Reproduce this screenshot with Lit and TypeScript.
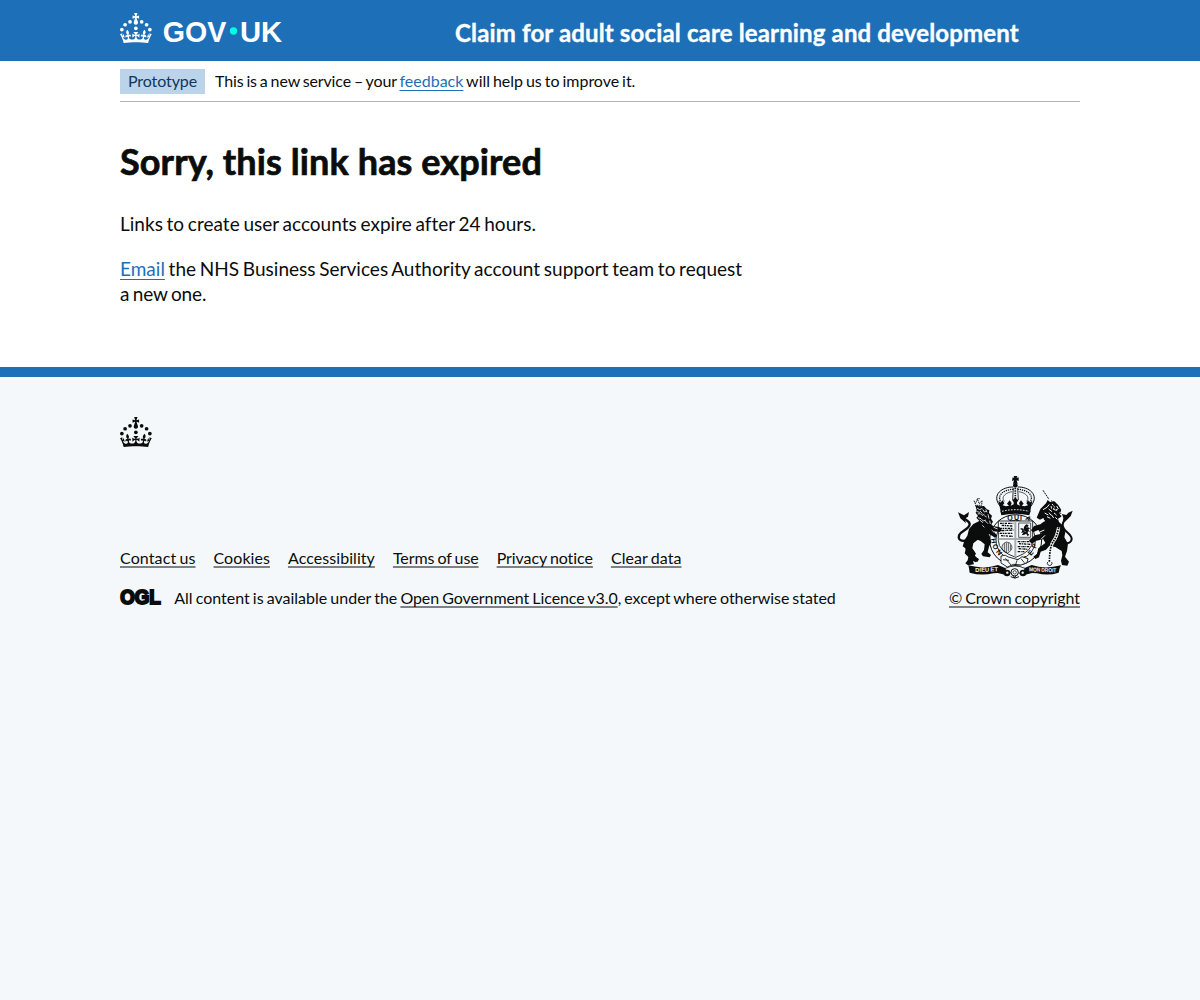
import { LitElement, html, css, svg } from "lit";
import { customElement } from "lit/decorators.js";

const crown = svg`
  <circle cx="20" cy="17.6" r="3.7"/><circle cx="10.2" cy="23.5" r="3.7"/><circle cx="3.7" cy="33.2" r="3.7"/>
  <circle cx="31.7" cy="30.6" r="3.7"/><circle cx="43.3" cy="17.6" r="3.7"/><circle cx="53.2" cy="23.5" r="3.7"/>
  <circle cx="59.7" cy="33.2" r="3.7"/>
  <path d="M33.1,9.8c.2-.1.3-.3.5-.5l4.6,2.4v-6.8l-4.6,1.5c-.1-.2-.3-.3-.5-.5l1.9-5.9h-6.7l1.9,5.9c-.2.1-.3.3-.5.5l-4.6-1.5v6.8l4.6-2.4c.1.2.3.3.5.5l-2.6,8c-.9,2.8,1.2,5.7,4.1,5.7h0c3,0,5.1-2.9,4.1-5.7l-2.6-8ZM37,37.9s-3.4,3.8-4.1,6.1c2.2,0,4.2-.5,6.4-2.8l-.7,8.5c-2-2.8-4.4-4.1-5.7-3.8.1,3.1.5,6.7,5.8,7.2,3.7.3,6.7-1.5,7-3.8.4-2.6-2-4.3-3.7-1.6-1.4-4.5,2.4-6.1,4.9-3.2-1.9-4.5-1.8-7.7,2.4-10.9,3,4,2.6,7.3-1.2,11.1,2.4-1.3,6.2,0,4,4.6-1.2-2.8-3.7-2.2-4.2.2-.3,1.7.7,3.7,3,4.2,1.9.3,4.7-.9,7-5.9-1.3,0-2.4.7-3.9,1.7l2.4-8c.6,2.3,1.4,3.7,2.2,4.5.6-1.6.5-2.8,0-5.3l5,1.8c-2.6,3.6-5.2,8.7-7.3,17.5-7.4-1.1-15.7-1.7-24.5-1.7h0c-8.8,0-17.1.6-24.5,1.7-2.1-8.9-4.7-13.9-7.3-17.5l5-1.8c-.5,2.5-.6,3.7,0,5.3.8-.8,1.6-2.3,2.2-4.5l2.4,8c-1.5-1-2.6-1.7-3.9-1.7,2.3,5,5.2,6.2,7,5.9,2.3-.4,3.3-2.4,3-4.2-.5-2.4-3-3.1-4.2-.2-2.2-4.6,1.6-6,4-4.6-3.7-3.7-4.2-7.1-1.2-11.1,4.2,3.2,4.3,6.4,2.4,10.9,2.5-2.8,6.3-1.3,4.9,3.2-1.8-2.7-4.1-1-3.7,1.6.3,2.3,3.3,4.1,7,3.8,5.4-.5,5.7-4.2,5.8-7.2-1.3-.2-3.7,1-5.7,3.8l-.7-8.5c2.2,2.3,4.2,2.7,6.4,2.8-.7-2.3-4.1-6.1-4.1-6.1h10.6,0Z"/>`;

@customElement("service-header")
export class ServiceHeader extends LitElement {
  static styles = css`
    :host { display: block; background: #1d70b8; color: #fff; }
    .bar { width: 960px; height: 61px; margin: 0 auto; display: flex; align-items: flex-start; }
    .logo { display: block; margin-top: 13px; flex: none; overflow: visible; }
    .dot { fill: #00ffe0; }
    .mark { font: 700 60px "Liberation Sans", Arial, sans-serif; fill: #fff; }
    .name { margin: 18px 0 0 173px; font-size: 24px; line-height: 30px; font-weight: 700;
      letter-spacing: 0.15px; white-space: nowrap; -webkit-text-stroke: 0.35px #fff; }
  `;
  render() {
    return html`<div class="bar">
      <svg class="logo" viewBox="0 0 324 60" width="162" height="30" fill="currentColor" role="img" aria-label="GOV.UK">
        ${crown}
        <text class="mark" x="85.500" y="57" textLength="127" lengthAdjust="spacingAndGlyphs">GOV</text>
        <circle class="dot" cx="227" cy="36" r="7.3"/>
        <text class="mark" x="240" y="57" textLength="84.500" lengthAdjust="spacingAndGlyphs">UK</text>
      </svg>
      <div class="name">Claim for adult social care learning and development</div>
    </div>`;
  }
}

@customElement("royal-arms")
export class RoyalArms extends LitElement {
  static styles = css`
    :host { display: block; }
    svg { display: block; }
    .ink { fill: #0b0c0c; }
    .paper { fill: #f4f8fb; }
    .line { fill: none; stroke: #0b0c0c; }
    .cut { fill: none; stroke: #f4f8fb; }
    .motto { font: 700 17px "Liberation Sans", Arial, sans-serif; fill: #f4f8fb; }
    .garter { font: 700 21px "Liberation Sans", Arial, sans-serif; fill: #0b0c0c; }
  `;
  render() {
    return html`<svg viewBox="12 18 393 309" width="131" height="103" aria-hidden="true">
      <!-- crown -->
      <path class="ink" d="M203 22l5 2-2-6h11l-2 6 6-2v11l-6-2 3 10h-14l3-10-6 2z"/>
      <circle class="ink" cx="211" cy="46" r="7"/>
      <path class="line" stroke-width="3" d="M165 108C138 74 172 50 205 51M258 108C285 74 251 50 218 51"/>
      <path class="line" stroke-width="4" stroke-dasharray="4 2.500" d="M170 98C151 76 179 58 205 58M253 98C272 76 244 58 218 58"/>
      <path class="line" stroke-width="2" d="M178 94C166 80 184 67 202 65M245 94C257 80 239 67 221 65"/>
      <path class="line" stroke-width="2.500" d="M205 54l-2 36M218 54l2 36"/>
      <path class="line" stroke-width="5" stroke-dasharray="4 3" d="M211 54v34"/>
      <path class="ink" d="M160 92l8 6 5-8 5 10-5 6 10 3 9-2-6-6 8-10 6 8-3 8 9-4 0-6-4-6 9-8 9 8-4 6 0 6 9 4-3-8 6-8 8 10-6 6 9 2 10-3-5-6 5-10 5 8 8-6-7 36H168z"/>
      <path class="ink" d="M166 122q46-14 91 0l-4 14q-42-9-84 0z"/>
      <path class="cut" stroke-width="3" stroke-dasharray="5 4" d="M171 124q40-10 81 0"/>
      <!-- garter and shield -->
      <ellipse class="paper" cx="212" cy="210" rx="78" ry="77"/>
      <ellipse class="line" stroke-width="3" cx="212" cy="210" rx="78" ry="76"/>
      <ellipse class="line" stroke-width="2.500" cx="212" cy="210" rx="59" ry="59"/>
      <text class="garter" x="187" y="151" textLength="44">QUI</text>
      <text class="garter" transform="translate(240 148) rotate(32)">A</text>
      <text class="garter" transform="translate(138 206) rotate(82)">H</text>
      <text class="garter" transform="translate(142 226) rotate(68)">O</text>
      <text class="garter" transform="translate(152 246) rotate(50)">N</text>
      <text class="garter" transform="translate(239 276) rotate(-34)">S</text>
      <text class="garter" transform="translate(258 258) rotate(-50)">E</text>
      <text class="garter" transform="translate(272 237) rotate(-68)">P</text>
      <path class="paper" d="M160 153h103v58q0 33-51 51-52-18-52-51z"/>
      <path class="line" stroke-width="2.500" d="M160 153h103v58q0 33-51 51-52-18-52-51z"/>
      <path class="line" stroke-width="4" stroke-dasharray="8 2 3 2 6 3" d="M165 160h40M170 166l34 2M164 175h40M169 182l36-2M164 190h40M168 197l36 2"/>
      <path class="line" stroke-width="4" stroke-dasharray="7 2 3 2" d="M218 215h40M222 221l34 2M218 230h36M221 236l28 2M218 245h20"/>
      <path class="line" stroke-width="2" d="M221 159h36v43h-36z"/>
      <path class="ink" d="M230 196l6-9-7 2 3-8-7-5 7-2 3 5 3-10 6-6 7 3-3 5 7 4-5 4 5 7-6-2-1 6 5 5-6 3-3-7-6 3z"/>
      <path class="cut" stroke-width="1.500" d="M236 182l6 3M244 170l3 4"/>
      <path class="line" stroke-width="2" d="M184 216q-17 7-12 22 4 10 16 11 16-9 12-22-3-11-16-11zM178 220v24M184 218v29M190 219v25M196 224v17"/>
      <path d="M211 154v106M161 207h101" fill="none" stroke="#a9adb0" stroke-width="6"/>
      <!-- lion -->
      <path class="line" stroke-width="3" stroke-dasharray="4 2" d="M87 92l4 10 6-15 6 14 8-9-1 14H90M97 86h8"/>
      <path class="ink" d="M91 106l12 3 14-1 8 9 8 4-1 8 9 8-3 9 6 9-5 8 5 5 20 4 7 9-7 5-18-2 11 14-7 5-17-11-10 9-21 5-17 14-3 15 11 16-5 8 14 8-4 8-19-4-4-12-10-6-4-18-8-6 6-20 8-12 5-20 13-15 18-9-9-10 5-5-7-10 3-8-3-10z"/>
      <path class="cut" stroke-width="2.500" d="M96 114l8 5 8-4M94 124l9 3 5-4M98 132l8-1 5 5 7-3M113 118l5 8 6-2M118 137l7 4M99 143l9 3 7 7 8-3M120 152l9 9M129 133l3 13M108 126l4 5M112 166l6 6M122 118l4 9M104 150l10 8M134 152l2 10M146 172l12 5M140 180l8 8"/>
      <path class="ink" d="M125 185l9 14 5 17-7 14-4 17 10 8-4 7-20-3-5-7 8-12 2-17-12-10-13-5z"/>
      <path class="ink" d="M64 232l23 10 3 15 10 12-7 8-9-4 3 10-18 3-8-6 7-9 2-10-11-11z"/>
      <path class="line" stroke-width="7" stroke-linecap="round" d="M66 211c-18 5-29-3-23-17 6-12 29-16 31-31 1-12-18-14-22-24"/>
      <path class="ink" d="M39 127l18 9 15-10-3 14-10 6 4 14-17-15z"/>
      <!-- unicorn -->
      <path class="line" stroke-width="3" stroke-dasharray="6 2" d="M294 61l18 27"/>
      <path class="ink" d="M286 117l17-17 5-10 7 6 13-2 12 12 9 14-6 9 6 11-10 6 3 10 10 9 9 21-3 16 11 19-3 22-6 17 12 15-5 12-16-2-3-13 4-16-2-13-19-12-18-3-10 11-16 6-5 17-11 5-6-7 11-8 4-17 21-16-6-11-21 4-13 9-9-9 17-16 21-5-10-11-16 7-6-6 9-13 19-5 13-10-4-9-10 5-10-6z"/>
      <path class="cut" stroke-width="3" d="M294 119l12-7 7-9M311 117l10 8M321 102l8 9-4 7 11 4M327 129l9 7M319 134l7 10M306 140l10 5M299 129l11 6M335 108l5 9M318 108l2 8M330 118l8 1M312 128l6 8M331 142l6 6M290 150l10 3M284 186l14-6M300 196l-12 12"/>
      <path class="line" stroke-width="3" stroke-dasharray="4 3" d="M318 92q32 13 29 48M324 106q14 15 9 35"/>
      <path d="M341 172q-5 29-16 42t-12 65" fill="none" stroke="#f4f8fb" stroke-width="10"/>
      <path class="line" stroke-width="5" stroke-dasharray="5 3" d="M341 172q-5 29-16 42t-12 65"/>
      <path class="line" stroke-width="2.500" d="M308 276a7 7 0 1 0 12 0"/>
      <path class="line" stroke-width="6" stroke-linecap="round" d="M354 217c20 9 31-6 23-19-7-12-24-17-24-34 0-14 12-13 19-25"/>
      <path class="ink" d="M383 122l-6 17-13 8-12 15 3-18-4-12 13 3 6-7z"/>
      <!-- garter buckle, roses and motto -->
      <path class="paper" stroke="#0b0c0c" stroke-width="2.500" d="M168 258q14-6 22 3l29 8 12-9 18 6-3 12-18 7-22-2-19 8-19-12z"/>
      <path class="line" stroke-width="2.500" d="M181 265l17 20M216 271l-6 19M228 266l10 12M174 269l18 2"/>
      <path class="ink" d="M70 286q48 13 89-1l23 10-2 19-22-5-13 1q-36 8-71-2l-2-13z"/>
      <path class="ink" d="M348 286q-49 13-88-1l-23 10 4 19 20-5 15 1q34 8 65-2l3-13z"/>
      <text class="motto" transform="translate(91 306) rotate(-2)" textLength="68" lengthAdjust="spacingAndGlyphs">DIEU ET</text>
      <text class="motto" transform="translate(252 304) rotate(2)" textLength="82" lengthAdjust="spacingAndGlyphs">MON DROIT</text>
      <path class="paper" stroke="#0b0c0c" stroke-width="2.500" d="M181 295q29-14 59 0l-6 17-16-4-9 16-10-16-15 3z"/>
      <circle class="ink" cx="186" cy="309" r="10"/><circle class="ink" cx="234" cy="309" r="10"/>
      <circle class="paper" cx="209" cy="307" r="11" stroke="#0b0c0c" stroke-width="3"/>
      <circle class="line" cx="209" cy="307" r="5" stroke-width="2"/>
      <circle class="paper" cx="187" cy="308" r="3.500"/><circle class="paper" cx="233" cy="308" r="3.500"/>
      <path class="line" stroke-width="3" d="M197 320q13 9 25 0"/>
    </svg>`;
  }
}

@customElement("app-root")
export class AppRoot extends LitElement {
  static styles = css`
    :host { display: flex; flex-direction: column; min-height: 1000px; background: #fff; color: #0b0c0c;
      font-family: Lato, "Noto Sans", sans-serif; font-size: 16px; line-height: 20px; }
    .wrap { width: 960px; margin: 0 auto; }
    a { text-decoration: underline; text-decoration-thickness: 1px; text-underline-offset: 3px; text-decoration-skip-ink: none; }
    .phase { display: flex; padding: 8px 0 7px; border-bottom: 1px solid #b1b4b6; word-spacing: -1px; white-space: pre; }
    .tag { box-sizing: border-box; width: 85px; height: 25px; padding: 2px 8px 3px; margin-right: 10px; background: #bbd4ea; color: #0f385c; font-weight: 400; letter-spacing: -0.1px; }
    .notice { padding-top: 2px; }
    .lead { letter-spacing: -0.14px; }
    .tail { letter-spacing: -0.04px; }
    .blue { color: #1d70b8; }
    .content { height: 265px; box-sizing: border-box; padding-top: 39px; }
    h1 { margin: 0 0 30px; font-size: 36px; line-height: 40px; font-weight: 700; letter-spacing: 0.11px; -webkit-text-stroke: 0.7px #0b0c0c; }
    p { margin: 0 0 20px; width: 630px; font-size: 19px; line-height: 25px; word-spacing: -1.2px; letter-spacing: 0.02px; }
    .last { letter-spacing: -0.15px; }
    footer { flex: 1; border-top: 10px solid #1d70b8; background: #f4f8fb; padding-top: 40px; }
    .crest { display: block; }
    .meta { display: flex; justify-content: space-between; align-items: flex-end; margin-top: 29px; }
    .info { display: flex; flex-direction: column; gap: 20px; }
    .links { display: flex; gap: 18px; word-spacing: -1px; white-space: nowrap; }
    .foot { color: #0b0c0c; text-decoration-color: #7f8284; text-decoration-thickness: 2px; text-underline-offset: 2px; }
    .contact { letter-spacing: 0.11px; }
    .short { letter-spacing: 0.06px; }
    .terms { letter-spacing: -0.07px; }
    .privacy { letter-spacing: -0.06px; }
    .licence { display: flex; white-space: pre; word-spacing: -1px; }
    .ogl { display: block; margin: -1px 13.200px 0 0; overflow: visible; }
    .letters { font: 700 20px "Liberation Sans", Arial, sans-serif; fill: #0b0c0c; stroke: #0b0c0c; stroke-width: 2px; }
    .copy { display: flex; flex-direction: column; align-items: center; gap: 9px; width: 131px; white-space: nowrap; word-spacing: -1px; }
  `;
  render() {
    return html`
      <service-header></service-header>
      <div class="wrap">
        <div class="phase"><strong class="tag">Prototype</strong><span class="notice"><span class="lead">This is a new service – your </span><a class="blue">feedback</a><span class="tail"> will help us to improve it.</span></span></div>
        <main class="content">
          <h1>Sorry, this link has expired</h1>
          <p>Links to create user accounts expire after 24 hours.</p>
          <p><a class="blue">Email</a> the NHS Business Services Authority account support team to request <span class="last">a new one.</span></p>
        </main>
      </div>
      <footer>
        <div class="wrap">
          <svg class="crest" viewBox="0 0 64 60" width="32" height="30" fill="currentColor" aria-hidden="true">${crown}</svg>
          <div class="meta">
            <div class="info">
              <div class="links"><a class="foot contact">Contact us</a><a class="foot short">Cookies</a><a class="foot short">Accessibility</a><a class="foot terms">Terms of use</a><a class="foot privacy">Privacy notice</a><a class="foot short">Clear data</a></div>
              <div class="licence"><svg class="ogl" width="41" height="18" viewBox="0 0 41 18" role="img" aria-label="OGL"><text class="letters" x="0.300" y="16.500" textLength="40.500" lengthAdjust="spacingAndGlyphs">OGL</text></svg><span>All content is available under the </span><a class="foot terms">Open Government Licence v3.0</a><span class="tail">, except where otherwise stated</span></div>
            </div>
            <div class="copy"><royal-arms></royal-arms><a class="foot terms">© Crown copyright</a></div>
          </div>
        </div>
      </footer>`;
  }
}
